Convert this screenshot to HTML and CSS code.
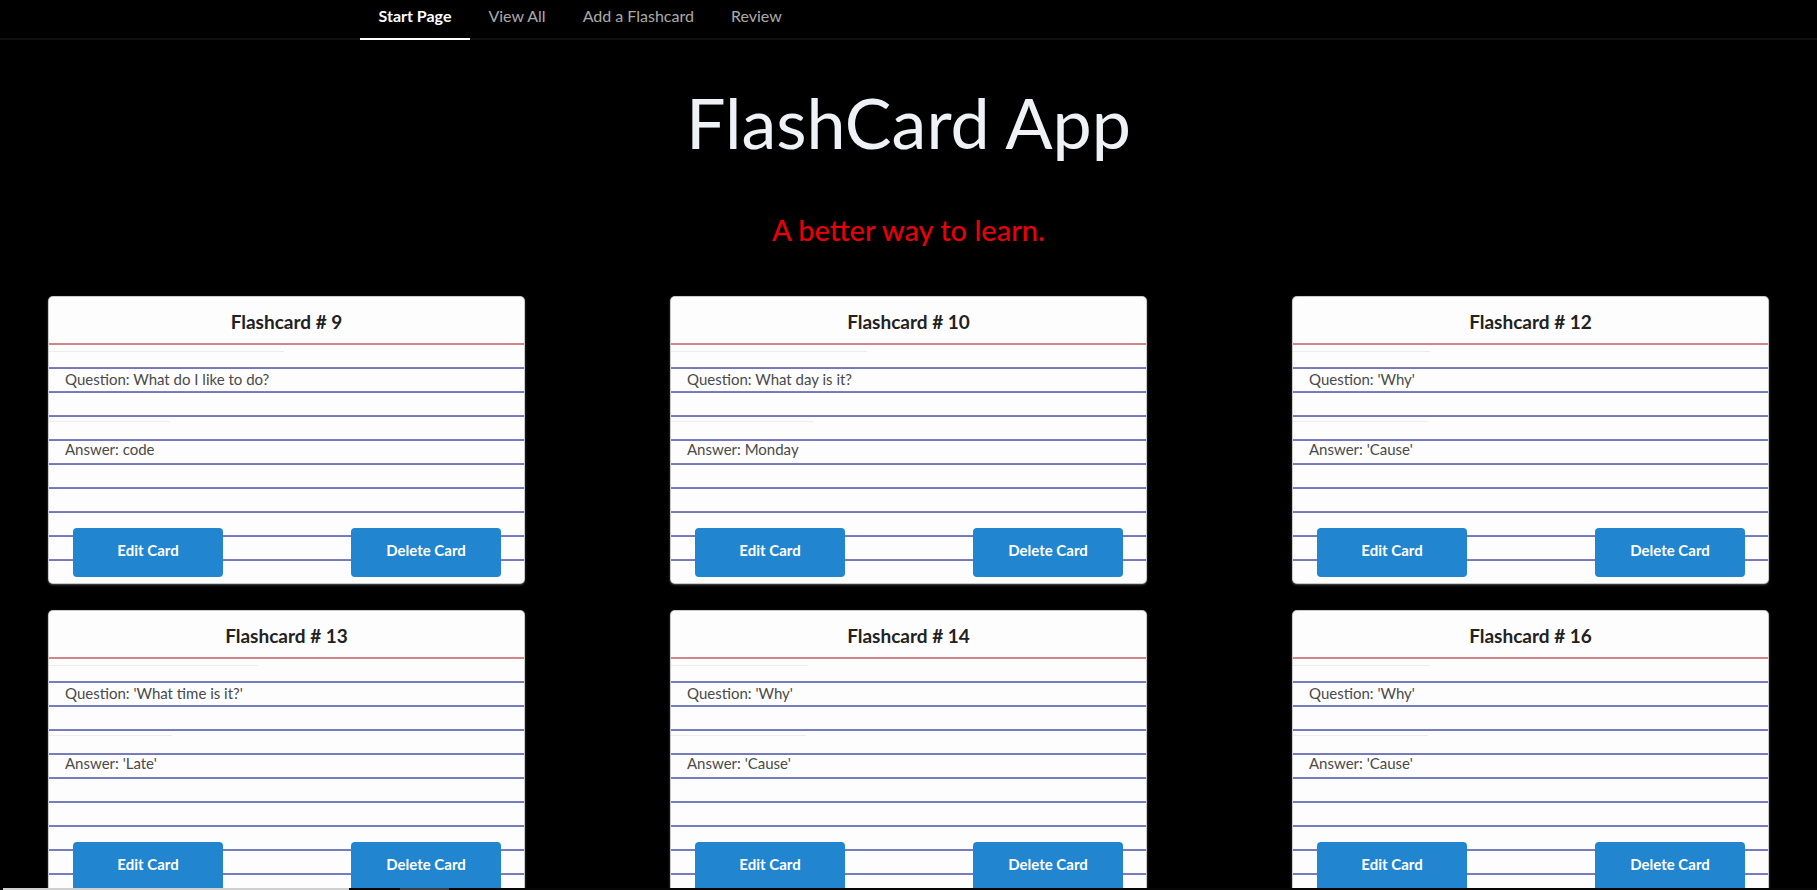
FILE: index.html
```html
<!DOCTYPE html>
<html lang="en">
<head>
<meta charset="utf-8">
<title>FlashCard App</title>
<link rel="stylesheet" href="styles.css">
</head>
<body>
<nav class="menu">
  <a class="menu-item active">Start Page</a>
  <a class="menu-item">View All</a>
  <a class="menu-item">Add a Flashcard</a>
  <a class="menu-item">Review</a>
</nav>

<header class="hero">
  <h1 class="hero-title">FlashCard App</h1>
  <h2 class="hero-sub">A better way to learn.</h2>
</header>

<main class="cards">
  <div class="card">
    <div class="card-header">Flashcard # 9</div>
    <div class="card-body">
      <div class="field">Question: What do I like to do?</div>
      <div class="field field-answer">Answer: code</div>
      <div class="card-actions">
        <button class="btn">Edit Card</button>
        <button class="btn">Delete Card</button>
      </div>
    </div>
  </div>
  <div class="card">
    <div class="card-header">Flashcard # 10</div>
    <div class="card-body">
      <div class="field">Question: What day is it?</div>
      <div class="field field-answer">Answer: Monday</div>
      <div class="card-actions">
        <button class="btn">Edit Card</button>
        <button class="btn">Delete Card</button>
      </div>
    </div>
  </div>
  <div class="card">
    <div class="card-header">Flashcard # 12</div>
    <div class="card-body">
      <div class="field">Question: 'Why'</div>
      <div class="field field-answer">Answer: 'Cause'</div>
      <div class="card-actions">
        <button class="btn">Edit Card</button>
        <button class="btn">Delete Card</button>
      </div>
    </div>
  </div>
  <div class="card">
    <div class="card-header">Flashcard # 13</div>
    <div class="card-body">
      <div class="field">Question: 'What time is it?'</div>
      <div class="field field-answer">Answer: 'Late'</div>
      <div class="card-actions">
        <button class="btn">Edit Card</button>
        <button class="btn">Delete Card</button>
      </div>
    </div>
  </div>
  <div class="card">
    <div class="card-header">Flashcard # 14</div>
    <div class="card-body">
      <div class="field">Question: 'Why'</div>
      <div class="field field-answer">Answer: 'Cause'</div>
      <div class="card-actions">
        <button class="btn">Edit Card</button>
        <button class="btn">Delete Card</button>
      </div>
    </div>
  </div>
  <div class="card">
    <div class="card-header">Flashcard # 16</div>
    <div class="card-body">
      <div class="field">Question: 'Why'</div>
      <div class="field field-answer">Answer: 'Cause'</div>
      <div class="card-actions">
        <button class="btn">Edit Card</button>
        <button class="btn">Delete Card</button>
      </div>
    </div>
  </div>
</main>

<div class="bottom-strip">
  <span class="strip-light"></span>
  <span class="strip-thumb"></span>
</div>
</body>
</html>
```

FILE: styles.css
```css
html, body {
  margin: 0;
  padding: 0;
  background: #000;
  overflow: hidden;
}

body {
  font-family: Lato, "Noto Sans", sans-serif;
  color: #fff;
  height: 890px;
}

/* ---------- nav ---------- */
.menu {
  display: flex;
  padding-left: 360px;
  border-bottom: 2px solid rgba(255, 255, 255, 0.06);
  height: 38px;
}

.menu-item {
  display: block;
  padding: 6px 18.5px 0;
  font-size: 16px;
  line-height: 19px;
  color: rgba(255, 255, 255, 0.68);
  border-bottom: 2px solid transparent;
  margin-bottom: -2px;
  cursor: pointer;
}

.menu-item.active {
  color: #fff;
  font-weight: 700;
  border-bottom-color: #fff;
}

/* ---------- hero ---------- */
.hero {
  text-align: center;
}

.hero-title {
  margin: 40px 0 0;
  font-size: 70px;
  line-height: 84px;
  font-weight: 400;
  color: #eef2f7;
}

.hero-sub {
  margin: 48px 0 0;
  font-size: 29px;
  line-height: 35px;
  font-weight: 500;
  color: #e8000a;
}

/* ---------- cards ---------- */
.cards {
  display: grid;
  grid-template-columns: repeat(3, 475px);
  column-gap: 147px;
  row-gap: 28px;
  padding-left: 49px;
  margin-top: 50px;
}

.card {
  height: 286px;
  box-sizing: border-box;
  background: #fdfdfd;
  border-radius: 4px;
  box-shadow: 0 0 0 1px #c9c9cb, 0 1px 3px 0 #9a9a9c;
  display: flex;
  flex-direction: column;
  overflow: hidden;
  color: #222;
}

.card-header {
  height: 48px;
  flex: none;
  box-sizing: border-box;
  padding-top: 13px;
  text-align: center;
  font-size: 19px;
  line-height: 23px;
  font-weight: 700;
  color: #222;
  border-bottom: 2px solid #d08686;
}

.card-body {
  flex: 1;
  display: flex;
  flex-direction: column;
  background-image: repeating-linear-gradient(
    to bottom,
    transparent 0,
    transparent 22px,
    #7d81c1 22px,
    #7074ba 24px
  );
}

.field {
  width: fit-content;
  margin-top: 6px;
  padding: 15px 15px 0 16px;
  border-top: 1px solid #ececec;
  font-size: 15px;
  line-height: 24px;
  color: #4a4a4a;
}

.field-answer {
  margin-top: 30px;
}

.card-actions {
  margin-top: auto;
  margin-bottom: 6px;
  display: flex;
  justify-content: space-between;
  padding: 0 23px 0 24px;
}

.btn {
  width: 150px;
  height: 49px;
  padding: 0 0 6px;
  border: none;
  border-radius: 4px;
  background: #2185d0;
  color: #fff;
  font-family: Lato, "Noto Sans", sans-serif;
  font-size: 15px;
  font-weight: 700;
  cursor: pointer;
}

/* ---------- bottom strip overlay ---------- */
.bottom-strip {
  position: fixed;
  left: 0;
  right: 0;
  bottom: 0;
  height: 2px;
  background: #060606;
}

.strip-light {
  position: absolute;
  left: 3px;
  width: 346px;
  top: 0;
  bottom: 0;
  background: #cfcfcf;
}

.strip-thumb {
  position: absolute;
  left: 400px;
  width: 49px;
  top: 0;
  bottom: 0;
  background: #3a3d42;
}
```
